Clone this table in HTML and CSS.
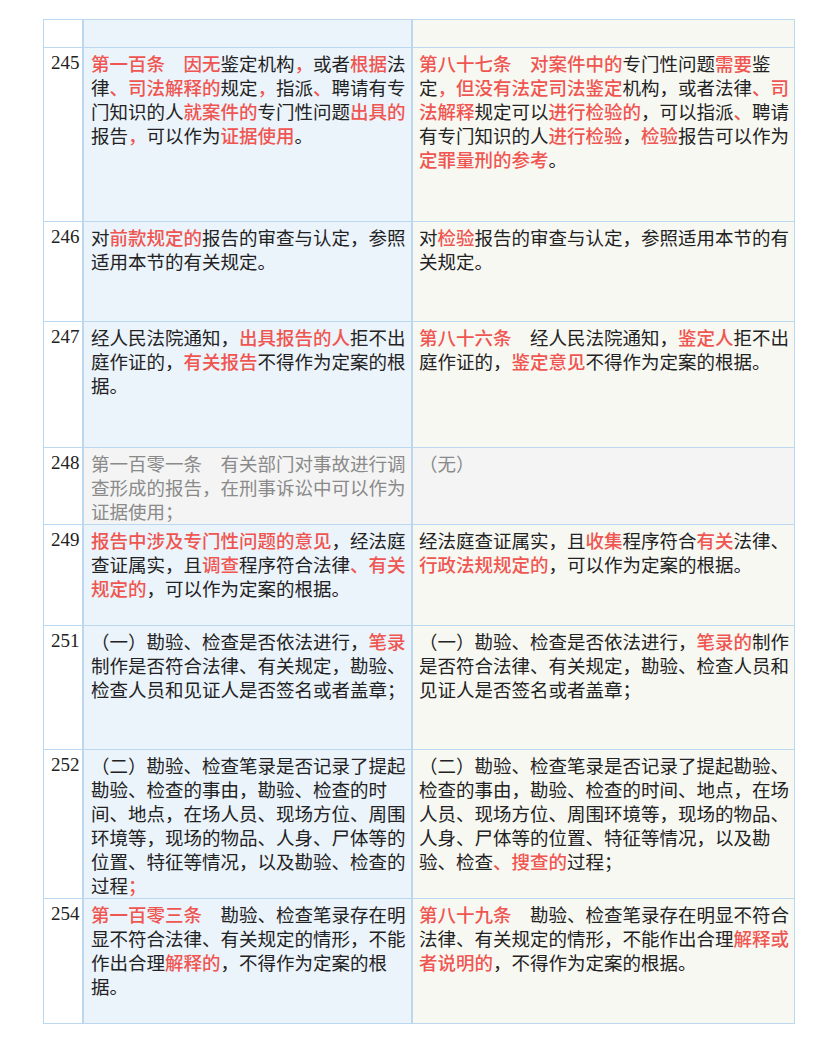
FILE: index.html
```html
<!DOCTYPE html>
<html lang="zh-CN">
<head>
<meta charset="utf-8">
<title>对照表</title>
<link rel="stylesheet" href="styles.css">
</head>
<body>
<div class="page">
  <div class="table">
    <div class="cell num"></div>
    <div class="cell old"></div>
    <div class="cell new"></div>

    <div class="cell num">245</div>
    <div class="cell old"><span class="hl">第一百条　因无</span>鉴定机构<span class="hl">，</span>或者<span class="hl">根据</span>法<br>律<span class="hl">、司法解释的</span>规定<span class="hl">，</span>指派<span class="hl">、</span>聘请有专<br>门知识的人<span class="hl">就案件的</span>专门性问题<span class="hl">出具的</span><br>报告<span class="hl">，</span>可以作为<span class="hl">证据使用</span>。</div>
    <div class="cell new"><span class="hl">第八十七条　对案件中的</span>专门性问题<span class="hl">需要</span>鉴<br>定<span class="hl">，但没有法定司法鉴定</span>机构，或者法律<span class="hl">、司</span><br><span class="hl">法解释</span>规定可以<span class="hl">进行检验的</span>，可以指派<span class="hl">、</span>聘请<br>有专门知识的人<span class="hl">进行检验</span>，<span class="hl">检验</span>报告可以作为<br><span class="hl">定罪量刑的参考</span>。</div>

    <div class="cell num">246</div>
    <div class="cell old">对<span class="hl">前款规定的</span>报告的审查与认定，参照<br>适用本节的有关规定。</div>
    <div class="cell new">对<span class="hl">检验</span>报告的审查与认定，参照适用本节的有<br>关规定。</div>

    <div class="cell num">247</div>
    <div class="cell old">经人民法院通知，<span class="hl">出具报告的人</span>拒不出<br>庭作证的，<span class="hl">有关报告</span>不得作为定案的根<br>据。</div>
    <div class="cell new"><span class="hl">第八十六条</span>　经人民法院通知，<span class="hl">鉴定人</span>拒不出<br>庭作证的，<span class="hl">鉴定意见</span>不得作为定案的根据。</div>

    <div class="cell num">248</div>
    <div class="cell old muted">第一百零一条　有关部门对事故进行调<br>查形成的报告，在刑事诉讼中可以作为<br>证据使用；</div>
    <div class="cell new muted">（无）</div>

    <div class="cell num">249</div>
    <div class="cell old"><span class="hl">报告中涉及专门性问题的意见</span>，经法庭<br>查证属实，且<span class="hl">调查</span>程序符合法律<span class="hl">、有关</span><br><span class="hl">规定的</span>，可以作为定案的根据。</div>
    <div class="cell new">经法庭查证属实，且<span class="hl">收集</span>程序符合<span class="hl">有关</span>法律、<br><span class="hl">行政法规规定的</span>，可以作为定案的根据。</div>

    <div class="cell num">251</div>
    <div class="cell old">（一）勘验、检查是否依法进行，<span class="hl">笔录</span><br>制作是否符合法律、有关规定，勘验、<br>检查人员和见证人是否签名或者盖章；</div>
    <div class="cell new">（一）勘验、检查是否依法进行，<span class="hl">笔录的</span>制作<br>是否符合法律、有关规定，勘验、检查人员和<br>见证人是否签名或者盖章；</div>

    <div class="cell num">252</div>
    <div class="cell old">（二）勘验、检查笔录是否记录了提起<br>勘验、检查的事由，勘验、检查的时<br>间、地点，在场人员、现场方位、周围<br>环境等，现场的物品、人身、尸体等的<br>位置、特征等情况，以及勘验、检查的<br>过程<span class="hl">；</span></div>
    <div class="cell new">（二）勘验、检查笔录是否记录了提起勘验、<br>检查的事由，勘验、检查的时间、地点，在场<br>人员、现场方位、周围环境等，现场的物品、<br>人身、尸体等的位置、特征等情况，以及勘<br>验、检查<span class="hl">、搜查的</span>过程；</div>

    <div class="cell num">254</div>
    <div class="cell old"><span class="hl">第一百零三条</span>　勘验、检查笔录存在明<br>显不符合法律、有关规定的情形，不能<br>作出合理<span class="hl">解释的</span>，不得作为定案的根<br>据。</div>
    <div class="cell new"><span class="hl">第八十九条</span>　勘验、检查笔录存在明显不符合<br>法律、有关规定的情形，不能作出合理<span class="hl">解释或</span><br><span class="hl">者说明的</span>，不得作为定案的根据。</div>
  </div>
</div>
</body>
</html>
```

FILE: styles.css
```css
html, body {
  margin: 0;
  padding: 0;
  background: #ffffff;
}

.page {
  padding: 19px 0 0 43px;
}

.table {
  display: grid;
  width: 752px;
  grid-template-columns: 38px 327px 381px;
  grid-template-rows: 27px 173px 99px 125px 76px 100px 123px 148px 124px;
  column-gap: 2px;
  row-gap: 1px;
  padding: 1px;
  box-sizing: border-box;
  background: #bcd7f0;
}

.cell {
  box-sizing: border-box;
  padding: 3px 0 0 7px;
  font-family: "Noto Sans CJK SC", "Noto Sans CJK JP", sans-serif;
  font-size: 18.5px;
  line-height: 24px;
  color: #222222;
  white-space: nowrap;
  overflow: hidden;
}

.num {
  background: #ffffff;
  font-family: "Liberation Serif", "Times New Roman", serif;
  font-size: 19px;
  color: #222222;
  padding-left: 7px;
}

.old {
  background: #ebf3fb;
}

.new {
  background: #f8f8f3;
  padding-left: 6px;
}

.muted {
  background: #f4f4f4;
  color: #8a8a8a;
}

.hl {
  color: #ef5651;
  font-weight: 500;
}
```
